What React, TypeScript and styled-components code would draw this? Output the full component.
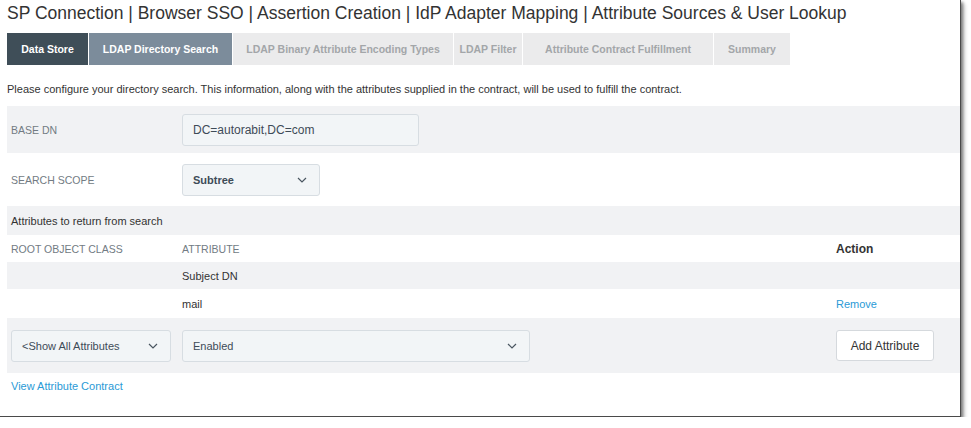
import React from "react";
import styled, { createGlobalStyle } from "styled-components";

const Global = createGlobalStyle`
  html, body { margin: 0; padding: 0; background: #fff; }
  body { font-family: "Liberation Sans", Arial, sans-serif; }
  * { box-sizing: border-box; }
`;

const Panel = styled.div`
  width: 961px;
  height: 417px;
  background: #fff;
  border-right: 1px solid #4a4a4a;
  border-bottom: 1px solid #4a4a4a;
  box-shadow: 2px 2px 3px rgba(0, 0, 0, 0.45), 4px 4px 4px rgba(0, 0, 0, 0.15);
  padding-left: 7px;
  overflow: hidden;
`;

const Title = styled.h1`
  margin: 0;
  font-weight: 400;
  font-size: 17.5px;
  line-height: 26px;
  color: #333;
  white-space: nowrap;
`;

const TabBar = styled.div`
  display: flex;
  gap: 1px;
  margin-top: 7px;
`;

const Tab = styled.div<{ $state: "done" | "active" | "todo" }>`
  height: 32px;
  display: flex;
  align-items: center;
  justify-content: center;
  font-size: 10.5px;
  font-weight: 700;
  white-space: nowrap;
  background: ${(p) =>
    p.$state === "done" ? "#3f4e58" : p.$state === "active" ? "#7c8c9b" : "#ebebec"};
  color: ${(p) => (p.$state === "todo" ? "#a3a6a9" : "#fff")};
`;

const Intro = styled.p`
  margin: 0;
  padding: 17px 0 10px;
  font-size: 11px;
  line-height: 14px;
  color: #333;
`;

const Row = styled.div<{ $h: number; $shade?: boolean }>`
  display: grid;
  grid-template-columns: 175px 654px 1fr;
  align-items: center;
  height: ${(p) => p.$h}px;
  background: ${(p) => (p.$shade ? "#f1f2f4" : "#fff")};
`;

const Label = styled.div`
  padding-left: 4px;
  font-size: 10.5px;
  color: #727b83;
  text-transform: uppercase;
`;

const Cell = styled.div<{ $pad?: number }>`
  padding-left: ${(p) => p.$pad ?? 0}px;
  font-size: 11px;
  color: #333;
`;

const Heading = styled.div`
  padding-left: 4px;
  font-size: 11px;
  color: #333;
  grid-column: 1 / -1;
`;

const ActionHead = styled.div`
  font-size: 12px;
  font-weight: 700;
  color: #333;
`;

const Field = styled.div<{ $w: number }>`
  width: ${(p) => p.$w}px;
  height: 32px;
  display: flex;
  align-items: center;
  justify-content: space-between;
  padding: 0 12px 0 10px;
  background: #f2f5f7;
  border: 1px solid #d7dde2;
  border-radius: 3px;
  font-size: 12px;
  color: #3e4b57;
`;

const SelectText = styled.span<{ $bold?: boolean }>`
  font-size: 11px;
  font-weight: ${(p) => (p.$bold ? 700 : 400)};
  color: #3e4b57;
`;

const Link = styled.a`
  font-size: 11px;
  color: #2a9ad6;
  text-decoration: none;
`;

const Button = styled.button`
  width: 98px;
  height: 31px;
  background: #fff;
  border: 1px solid #d5d9dd;
  border-radius: 3px;
  font-family: inherit;
  font-size: 12px;
  color: #333;
  padding: 0;
`;

const Footer = styled.div`
  padding: 5px 0 0 4px;
  line-height: 14px;
`;

const Chevron = () => (
  <svg width="10" height="6" viewBox="0 0 10 6">
    <polyline points="1,1 5,5 9,1" fill="none" stroke="#4a5661" strokeWidth="1.2" />
  </svg>
);

export default function App() {
  return (
    <>
      <Global />
      <Panel>
        <Title>
          SP Connection | Browser SSO | Assertion Creation | IdP Adapter Mapping | Attribute Sources &amp; User Lookup
        </Title>
        <TabBar>
          <Tab $state="done" style={{ width: 81 }}>Data Store</Tab>
          <Tab $state="active" style={{ width: 143 }}>LDAP Directory Search</Tab>
          <Tab $state="todo" style={{ width: 220 }}>LDAP Binary Attribute Encoding Types</Tab>
          <Tab $state="todo" style={{ width: 68 }}>LDAP Filter</Tab>
          <Tab $state="todo" style={{ width: 190 }}>Attribute Contract Fulfillment</Tab>
          <Tab $state="todo" style={{ width: 76 }}>Summary</Tab>
        </TabBar>
        <Intro>
          Please configure your directory search. This information, along with the attributes supplied in the contract, will be used to fulfill the contract.
        </Intro>
        <Row $h={47} $shade>
          <Label>Base DN</Label>
          <Field $w={237}>DC=autorabit,DC=com</Field>
        </Row>
        <Row $h={53}>
          <Label>Search Scope</Label>
          <Field $w={138}>
            <SelectText $bold>Subtree</SelectText>
            <Chevron />
          </Field>
        </Row>
        <Row $h={29} $shade>
          <Heading>Attributes to return from search</Heading>
        </Row>
        <Row $h={27}>
          <Label>Root Object Class</Label>
          <Label style={{ paddingLeft: 0 }}>Attribute</Label>
          <ActionHead>Action</ActionHead>
        </Row>
        <Row $h={27} $shade>
          <div />
          <Cell>Subject DN</Cell>
          <div />
        </Row>
        <Row $h={29}>
          <div />
          <Cell>mail</Cell>
          <Link href="#">Remove</Link>
        </Row>
        <Row $h={55} $shade>
          <Cell $pad={4}>
            <Field $w={160}>
              <SelectText>&lt;Show All Attributes</SelectText>
              <Chevron />
            </Field>
          </Cell>
          <Cell>
            <Field $w={348}>
              <SelectText>Enabled</SelectText>
              <Chevron />
            </Field>
          </Cell>
          <div>
            <Button>Add Attribute</Button>
          </div>
        </Row>
        <Footer>
          <Link href="#">View Attribute Contract</Link>
        </Footer>
      </Panel>
    </>
  );
}
